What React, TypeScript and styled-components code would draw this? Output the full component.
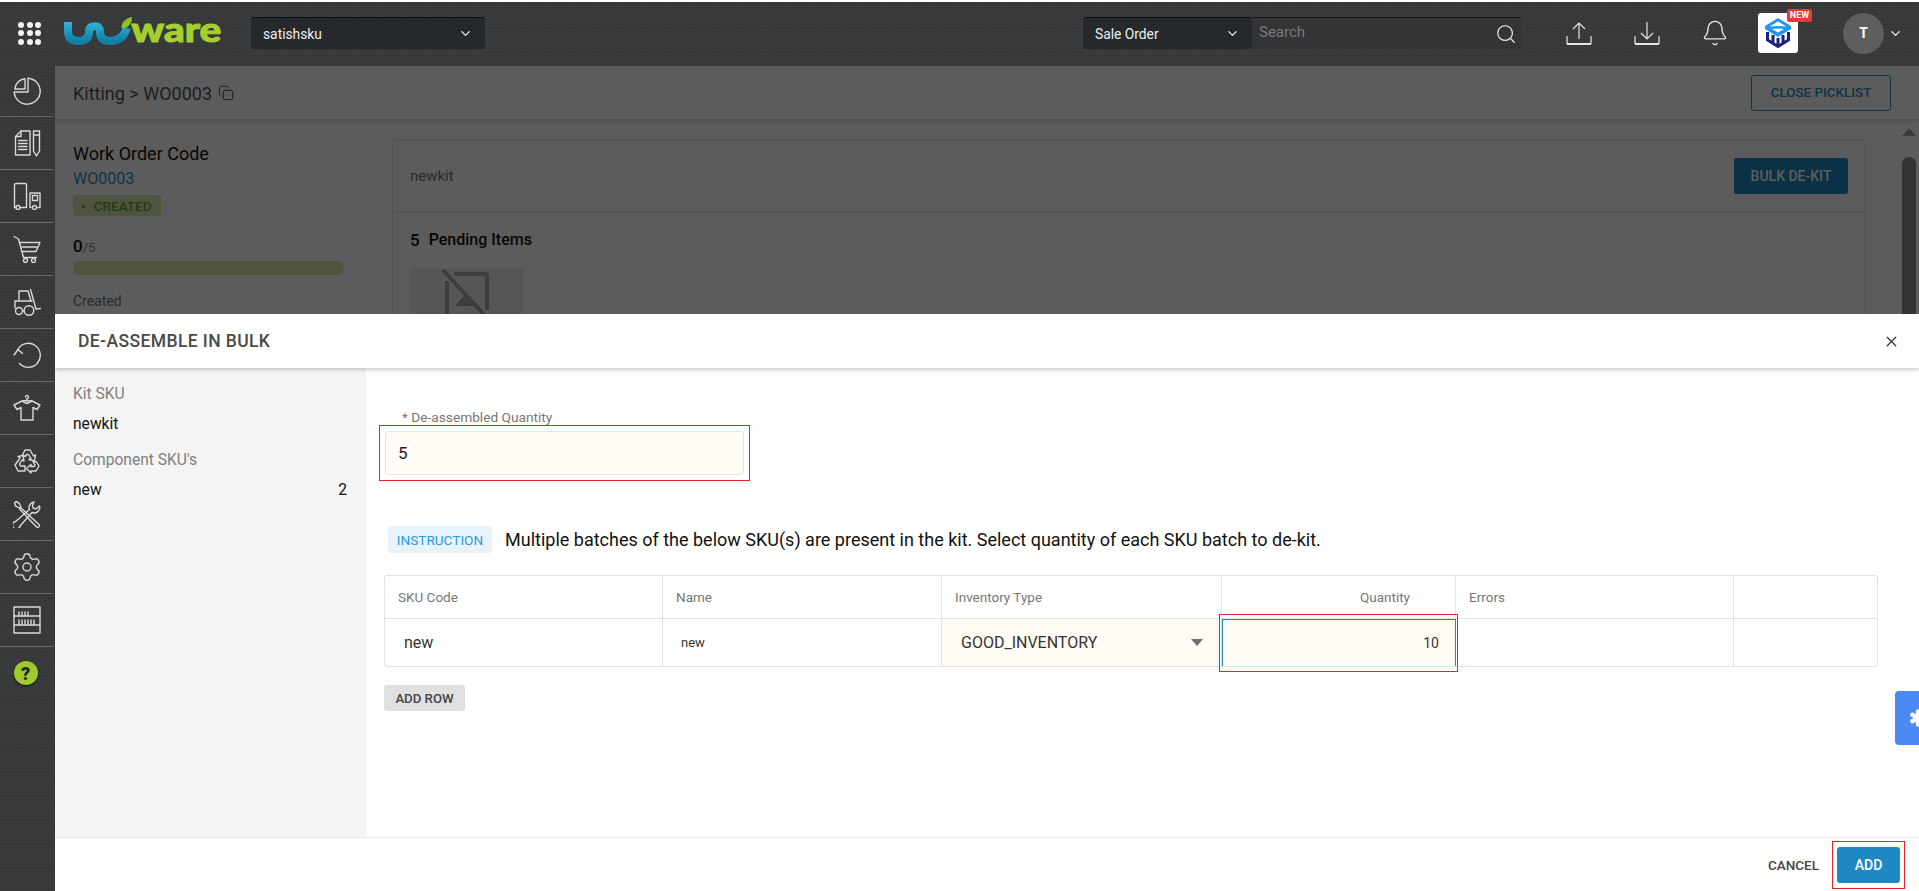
import React from "react";
import styled, { createGlobalStyle } from "styled-components";
import { Asterisk, Bell, ChevronDown, Copy, Search, Settings, X } from "lucide-react";

const GlobalStyle = createGlobalStyle`
  html, body {
    margin: 0;
    padding: 0;
    background: #fff;
    font-family: Roboto, "Liberation Sans", sans-serif;
  }
  * {
    box-sizing: border-box;
  }
`;

const texture = `
  background-color: #38393b;
  background-image:
    repeating-linear-gradient(0deg, rgba(255, 255, 255, 0.018) 0 1px, transparent 1px 3px),
    repeating-linear-gradient(90deg, rgba(0, 0, 0, 0.05) 0 1px, transparent 1px 3px);
`;

const Shell = styled.div`
  width: 1919px;
  height: 891px;
  padding-top: 2px;
  display: flex;
  flex-direction: column;
  overflow: hidden;
`;

const Header = styled.header`
  ${texture}
  height: 64px;
  flex-shrink: 0;
  display: flex;
  align-items: center;
  padding: 0 16px 2px 18px;
`;

const Dots = styled.div`
  display: grid;
  grid-template-columns: repeat(3, 6px);
  gap: 2.5px;
  span {
    width: 6px;
    height: 6px;
    border-radius: 50%;
    background: #f2f2f2;
  }
`;

const LogoWrap = styled.svg`
  width: 160px;
  height: 40px;
  margin-left: 21px;
  margin-bottom: 10px;
`;

const SelectBox = styled.div<{ $w: number }>`
  width: ${(p) => p.$w}px;
  height: 32px;
  padding: 0 12px;
  background: #25292b;
  border-radius: 3px;
  border-top: 1px solid #111;
  color: #eee;
  font-size: 13.8px;
  display: flex;
  align-items: center;
  justify-content: space-between;
`;

const TenantSelect = styled(SelectBox)`
  margin-left: 29px;
`;

const SearchGroup = styled.div`
  margin-left: auto;
  display: flex;
`;

const SearchBox = styled.div`
  width: 269px;
  height: 32px;
  background: #333435;
  border-top: 1px solid #151515;
  border-radius: 0 3px 3px 0;
  display: flex;
  align-items: center;
  justify-content: space-between;
  padding: 0 4px 0 7px;
  color: #eee;
`;

const SearchInput = styled.input`
  border: 0;
  background: transparent;
  outline: none;
  font-family: Roboto, sans-serif;
  font-size: 15px;
  width: 200px;
  padding: 0 0 3px;
  &::placeholder {
    color: #7b7b7b;
  }
`;

const HeaderIcons = styled.div`
  margin-left: 44px;
  display: flex;
  gap: 40px;
  color: #e6e6e6;
`;

const CubeBadge = styled.div`
  position: relative;
  width: 40px;
  height: 40px;
  margin-left: 29px;
  background: #fff;
  border-radius: 3px;
  display: flex;
  align-items: center;
  justify-content: center;
`;

const NewTag = styled.span`
  position: absolute;
  top: -4px;
  right: -14px;
  width: 25px;
  height: 13px;
  background: #e53935;
  border-radius: 2px;
  color: #fff;
  font-size: 9px;
  font-weight: 700;
  line-height: 13px;
  text-align: center;
`;

const Avatar = styled.div`
  width: 41px;
  height: 41px;
  margin-left: 45px;
  border-radius: 50%;
  background: #5e5e5e;
  color: #fff;
  font-size: 14px;
  font-weight: 700;
  display: flex;
  align-items: center;
  justify-content: center;
`;

const AvatarCaret = styled.div`
  margin-left: 4px;
  display: flex;
  color: #f2f2f2;
`;

const Main = styled.div`
  flex: 1;
  display: flex;
  min-height: 0;
`;

const Sidebar = styled.nav`
  ${texture}
  width: 55px;
  flex-shrink: 0;
  display: flex;
  flex-direction: column;
`;

const NavItem = styled.div<{ $first?: boolean }>`
  height: ${(p) => (p.$first ? 51 : 53)}px;
  width: 53px;
  flex-shrink: 0;
  display: flex;
  align-items: center;
  justify-content: center;
  padding: 0 0 1px 1px;
  color: #d8d8d8;
  border-bottom: 1px solid #6a6a6a;
  &:last-child {
    border-bottom: 0;
  }
`;

const HelpDot = styled.div`
  width: 24px;
  height: 24px;
  margin-left: -3px;
  border-radius: 50%;
  background: #9ccb2b;
  color: #23261a;
  font-size: 18px;
  font-weight: 900;
  display: flex;
  align-items: center;
  justify-content: center;
  box-shadow: 0 1px 2px #111;
`;

const Content = styled.main`
  position: relative;
  flex: 1;
  background: #fff;
  overflow: hidden;
`;

const Dim = styled.div`
  position: absolute;
  inset: 0;
  background: rgba(0, 0, 0, 0.64);
`;

const SubHeader = styled.div`
  height: 54px;
  padding: 0 28px 0 18px;
  border-bottom: 1px solid #ddd;
  box-shadow: 0 2px 4px rgba(0, 0, 0, 0.12);
  display: flex;
  align-items: center;
  justify-content: space-between;
`;

const Crumb = styled.div`
  color: #555;
  font-size: 18px;
  display: flex;
  align-items: center;
  gap: 6px;
  padding-top: 1px;
`;

const OutlineButton = styled.button`
  width: 140px;
  height: 36px;
  border: 1px solid #2a8fca;
  border-radius: 3px;
  background: transparent;
  color: #2a8fca;
  font-family: Roboto, sans-serif;
  font-size: 13.4px;
  font-weight: 500;
`;

const PageRow = styled.div`
  display: flex;
  padding: 19px 0 0 18px;
`;

const SummaryColumn = styled.div`
  width: 319px;
  flex-shrink: 0;
  padding-top: 5px;
`;

const OrderLabel = styled.div`
  font-size: 18px;
  line-height: 20px;
  color: #111;
`;

const OrderCode = styled.div`
  margin-top: 5px;
  font-size: 16px;
  line-height: 20px;
  color: #2a90cc;
`;

const StatusBadge = styled.div`
  margin-top: 6px;
  width: 88px;
  height: 21px;
  padding-left: 8px;
  background: #dbe9b2;
  border-radius: 3px;
  color: #6aa52d;
  font-size: 13.5px;
  font-weight: 500;
  display: flex;
  align-items: center;
  gap: 8px;
`;

const Progress = styled.div`
  margin-top: 19px;
  line-height: 22px;
  font-size: 13px;
  color: #888;
  b {
    font-size: 17px;
    font-weight: 500;
    color: #111;
  }
`;

const ProgressBar = styled.div`
  margin-top: 2px;
  width: 271px;
  height: 14px;
  border-radius: 7px;
  background: #dbe9b2;
`;

const CreatedLabel = styled.div`
  margin-top: 17px;
  font-size: 14px;
  line-height: 18px;
  color: #777;
`;

const Card = styled.section`
  flex: 1;
  height: 500px;
  margin-right: 34px;
  border: 1px solid #e4e4e4;
  border-radius: 3px;
`;

const CardHead = styled.div`
  height: 72px;
  padding: 0 17px;
  border-bottom: 1px solid #e4e4e4;
  display: flex;
  align-items: center;
  justify-content: space-between;
  color: #777;
  font-size: 15px;
`;

const SolidButton = styled.button<{ $w: number }>`
  width: ${(p) => p.$w}px;
  height: 36px;
  border: 0;
  border-radius: 3px;
  background: #1f88c2;
  color: #fff;
  font-family: Roboto, sans-serif;
  font-size: 14px;
  font-weight: 500;
`;

const CardBody = styled.div`
  padding: 17px 17px 0;
`;

const PendingTitle = styled.div`
  line-height: 22px;
  font-size: 16px;
  font-weight: 500;
  color: #111;
  display: flex;
  align-items: center;
  gap: 9px;
  b {
    font-size: 17px;
    font-weight: 500;
  }
`;

const Thumb = styled.div`
  margin-top: 18px;
  width: 113px;
  height: 92px;
  background: #efefef;
  display: flex;
  justify-content: center;
  color: #a8a8a8;
`;

const ScrollRail = styled.div`
  width: 19px;
  flex-shrink: 0;
  margin-top: -11px;
  display: flex;
  flex-direction: column;
  align-items: center;
  padding-right: 1px;
`;

const ScrollArrow = styled.div`
  width: 0;
  height: 0;
  border-left: 7px solid transparent;
  border-right: 7px solid transparent;
  border-bottom: 8px solid #a6a6a6;
`;

const ScrollThumb = styled.div`
  margin-top: 21px;
  width: 14px;
  height: 400px;
  border-radius: 7px;
  background: #8e8e8e;
`;

const Modal = styled.div`
  position: absolute;
  left: 0;
  right: 0;
  top: 248px;
  bottom: 0;
  background: #fff;
  display: flex;
  flex-direction: column;
`;

const ModalHead = styled.div`
  position: relative;
  height: 54px;
  flex-shrink: 0;
  padding: 0 19px 0 23px;
  background: #fff;
  box-shadow: 0 2px 4px rgba(0, 0, 0, 0.2);
  display: flex;
  align-items: center;
  justify-content: space-between;
  color: #4a4a4a;
`;

const ModalTitle = styled.h2`
  margin: 0;
  font-size: 17.5px;
  font-weight: 500;
  letter-spacing: 0.4px;
`;

const ModalBody = styled.div`
  flex: 1;
  display: flex;
  min-height: 0;
`;

const SummaryPane = styled.aside`
  width: 311px;
  flex-shrink: 0;
  padding: 17px 19px 0 18px;
  background: #f4f4f4;
`;

const PaneLabel = styled.div`
  font-size: 15.6px;
  line-height: 18px;
  color: #808080;
`;

const PaneValue = styled.div`
  margin-top: 12px;
  margin-bottom: 18px;
  font-size: 15.6px;
  line-height: 18px;
  color: #111;
  display: flex;
  justify-content: space-between;
`;

const FormPane = styled.div`
  flex: 1;
  padding: 41px 0 0 13px;
`;

const FieldLabel = styled.label`
  display: block;
  margin-left: 23px;
  font-size: 13.7px;
  line-height: 16px;
  color: #777;
`;

const Highlight = styled.div`
  width: 371px;
  padding: 5px;
  border: 1px solid #e8202a;
`;

const QuantityInput = styled.input`
  display: block;
  width: 100%;
  height: 44px;
  padding: 0 12px;
  border: 1px solid #e4e4e4;
  border-radius: 3px;
  background: #fffcf5;
  color: #222;
  font-family: Roboto, sans-serif;
  font-size: 17px;
  outline: none;
`;

const InstructionRow = styled.div`
  margin: 45px 0 0 9px;
  display: flex;
  align-items: center;
  gap: 13px;
  color: #111;
  font-size: 18px;
`;

const InstructionTag = styled.span`
  width: 104px;
  height: 27px;
  border-radius: 3px;
  background: #e8f2fa;
  color: #2a9bdc;
  font-size: 13.6px;
  display: flex;
  align-items: center;
  justify-content: center;
`;

const SkuTable = styled.div`
  margin: 22px 0 0 5px;
  width: 1494px;
  border: 1px solid #e2e2e2;
  border-radius: 3px;
  display: grid;
  grid-template-columns: 278px 279px 280px 234px 278px 1fr;
  grid-template-rows: 43px 47px;
`;

const HeadCell = styled.div<{ $right?: boolean }>`
  padding: 0 ${(p) => (p.$right ? 45 : 13)}px 0 13px;
  border-right: 1px solid #e2e2e2;
  border-bottom: 1px solid #e2e2e2;
  color: #777;
  font-size: 13.5px;
  display: flex;
  align-items: center;
  justify-content: ${(p) => (p.$right ? "flex-end" : "flex-start")};
  &:nth-child(6) {
    border-right: 0;
  }
`;

const BodyCell = styled.div<{ $size?: number; $pad?: number }>`
  padding-left: ${(p) => p.$pad ?? 15}px;
  border-right: 1px solid #e2e2e2;
  color: #333;
  font-size: ${(p) => p.$size ?? 14}px;
  display: flex;
  align-items: center;
  &:last-child {
    border-right: 0;
  }
`;

const InventoryCell = styled(BodyCell)`
  padding-right: 18px;
  background: #fffcf5;
  justify-content: space-between;
`;

const Caret = styled.span`
  width: 0;
  height: 0;
  border-left: 6px solid transparent;
  border-right: 6px solid transparent;
  border-top: 7px solid #6f6f6f;
`;

const QuantityCell = styled(BodyCell)`
  position: relative;
  padding: 0 16px 0 0;
  background: #fffcf5;
  border-top: 1px solid #1f88c2;
  border-left: 1px solid #1f88c2;
  border-right: 1px solid #1f88c2;
  justify-content: flex-end;
  font-size: 14px;
  &::after {
    content: "";
    position: absolute;
    inset: -6px -3px -6px -4px;
    border: 1px solid #e8202a;
  }
`;

const AddRowButton = styled.button`
  display: block;
  margin: 18px 0 0 5px;
  width: 81px;
  height: 26px;
  border: 0;
  border-radius: 3px;
  background: #e0e0e0;
  color: #444;
  font-family: Roboto, sans-serif;
  font-size: 13.2px;
  font-weight: 500;
`;

const ModalFoot = styled.div`
  height: 54px;
  flex-shrink: 0;
  padding-right: 14px;
  border-top: 1px solid #e8e8e8;
  display: flex;
  align-items: center;
  justify-content: flex-end;
  gap: 13px;
`;

const CancelButton = styled.span`
  color: #444;
  font-size: 13.5px;
  font-weight: 500;
`;

const AddHighlight = styled.div`
  padding: 5px 4px;
  border: 1px solid #e8202a;
`;

const FeedbackTab = styled.div`
  position: absolute;
  right: 0;
  top: 625px;
  width: 24px;
  height: 54px;
  border-radius: 4px 0 0 4px;
  background: #4a8af4;
  color: #fff;
  overflow: hidden;
  display: flex;
  align-items: center;
  padding-left: 10px;
  svg {
    flex-shrink: 0;
  }
`;

const Logo = () => (
  <LogoWrap viewBox="20 0 480 120">
    <defs>
      <linearGradient id="uniBlue" x1="0" y1="0" x2="0" y2="1">
        <stop offset="0" stopColor="#2fb4d8" />
        <stop offset="1" stopColor="#0f7fa8" />
      </linearGradient>
    </defs>
    <path
      d="M38 42 V70 Q38 99 68 99 Q101 99 101 72 Q101 55 118 55 Q134 55 134 72 Q134 99 164 99 Q204 99 214 60"
      fill="none"
      stroke="url(#uniBlue)"
      strokeWidth="24"
      strokeLinecap="butt"
    />
    <path d="M198 58 Q200 34 230 26 Q230 54 206 62 Z" fill="#8fc02a" />
    <text
      x="228"
      y="103"
      fontFamily="Lato, sans-serif"
      fontWeight="900"
      fontSize="102"
      fill="#a5cf30"
      stroke="#a5cf30"
      strokeWidth="3"
      textLength="270"
      lengthAdjust="spacingAndGlyphs"
    >
      ware
    </text>
  </LogoWrap>
);

const NavSvg = ({ children }: { children: React.ReactNode }) => (
  <svg width="28" height="28" viewBox="0 0 28 28" fill="none" stroke="currentColor" strokeWidth="1.4" strokeLinejoin="round" strokeLinecap="round">
    {children}
  </svg>
);

const navIcons = [
  <NavSvg>
    <path d="M12 1.8A11.5 11.5 0 0 0 1.8 12H12Z" />
    <path d="M15 1.2A13 13 0 1 1 1.2 15H15Z" />
  </NavSvg>,
  <NavSvg>
    <path d="M8 2h9v24H2.5V7.5Z" />
    <path d="M8 2v5.500H2.500M5.500 11.500h8.500M5.500 14.500h8.500M5.500 17.500h8.500M5.500 20.500h8.500" />
    <path d="M20.500 2h6v20l-3 5-3-5ZM20.500 6h6" />
  </NavSvg>,
  <NavSvg>
    <path d="M3 25.500H1.500V3A1.500 1.500 0 0 1 3 1.500h9A1.500 1.500 0 0 1 13.500 3v22.500H7" />
    <circle cx="5" cy="25.500" r="2" />
    <path d="M18 25.500h-1V11h10v14.500h-2" />
    <rect x="19.500" y="13.500" width="5" height="5" />
    <circle cx="21.500" cy="25.500" r="2" />
  </NavSvg>,
  <NavSvg>
    <path d="M1 1.500l4.500 2.500 5 18.500h13" />
    <path d="M6.500 7.500H27l-4 9H9" />
    <path d="M9 12h15" />
    <circle cx="12.500" cy="25.500" r="2" />
    <circle cx="20.500" cy="25.500" r="2" />
  </NavSvg>,
  <NavSvg>
    <path d="M6 12V3h9l3 10" />
    <path d="M2 20v-7h17" />
    <circle cx="6" cy="23" r="3.500" />
    <circle cx="16" cy="22.500" r="4.800" />
    <path d="M17.500 1.500l5.500 19.500 4.500-.5M9.500 23h1.500" />
  </NavSvg>,
  <NavSvg>
    <path d="M4.800 8.500A12 12 0 1 1 6.500 22.500" />
    <path d="M1 14l4-5.500 4.500 4" />
  </NavSvg>,
  <NavSvg>
    <path d="M14 6.500l-5 .500L1 11l3 4.500 4-2V26h12V13.500l4 2 3-4.500-8-4Z" />
    <path d="M14 6.500V4.500a1.500 1.500 0 1 0-1.500-1.500M9 7l5 2.500L19 7" />
  </NavSvg>,
  <NavSvg>
    <path d="M9.500 8L12 3h5l3.500 6 2-1-1 6-5.500-1.500 2-1-2.500-4h-2l-1 2Z" />
    <path d="M7 11l-5 7 3 6h7v-5H7.500l-1-2L9 13l2 1-1-5.500-5 1Z" />
    <path d="M23.500 15l2.500 4-3 5h-5v2l-4.500-4.500L18 17.500v2h3l1-1.500-2-3.500Z" />
  </NavSvg>,
  <NavSvg>
    <path d="M1.500 3l1.500-1.500 3 1.500 2 4-1.200 1.200-4-2ZM8 8l18 16.500a1.800 1.800 0 0 1-2.500 2.500L6.800 9.200" />
    <path d="M21 2a5.500 5.500 0 0 0-4.500 7.500L2.500 21.500a3.800 3.800 0 1 0 4.500 4.500l12-13.500a5.500 5.500 0 0 0 7.500-6.500L23 9l-3-1-.5-3Z" />
  </NavSvg>,
  <Settings size={32} strokeWidth={1.05} />,
  <NavSvg>
    <rect x="1" y="1" width="26" height="26" />
    <path d="M1 10h26M1 19h26" />
    <path d="M6 6v4M9 6v4M12 6v4M15 6v4M6 14v5M9 14v5M12 14v5M15 14v5M18 14v5M21 14v5" />
  </NavSvg>,
];

const UploadIcon = () => (
  <svg width="28" height="28" viewBox="0 0 28 28" fill="none" stroke="currentColor" strokeWidth="1.2">
    <path d="M14 20V4M8 10l6-6 6 6M2 17v8M26 17v8" />
    <path d="M2 25h24" strokeWidth="2" />
  </svg>
);

const DownloadIcon = () => (
  <svg width="28" height="28" viewBox="0 0 28 28" fill="none" stroke="currentColor" strokeWidth="1.2">
    <path d="M14 3v17M8 14l6 6 6-6M2 17v8M26 17v8" />
    <path d="M2 25h24" strokeWidth="2" />
  </svg>
);

const CubeLogo = () => (
  <svg width="26" height="30" viewBox="0 0 26 30" fill="none">
    <path d="M13 0L26 8v3l-13 8L0 11V8Z" fill="#2196f3" />
    <path d="M13 3.500L21.500 8.500 13 8l-8.500.500Z" fill="#fff" />
    <path d="M13 10.500l6 .500-6 3.500-6-3.500Z" fill="#fff" />
    <path d="M2.500 14v8L13 28.500 23.500 22v-8M13 20v8.500M8 17v8M18 17v8" stroke="#1a237e" strokeWidth="3" />
  </svg>
);

const NoImage = () => (
  <svg width="52" height="52" viewBox="0 0 52 52" fill="none" stroke="currentColor" strokeWidth="4">
    <path d="M13 5h31a2 2 0 0 1 2 2v34M6 12v40" />
    <path d="M2 1l46 50" />
    <path d="M14 37h20l-10-11Z" fill="currentColor" stroke="none" />
  </svg>
);

const App = () => (
  <>
    <GlobalStyle />
    <Shell>
      <Header>
        <Dots>
          {Array.from({ length: 9 }).map((_, i) => (
            <span key={i} />
          ))}
        </Dots>
        <Logo />
        <TenantSelect $w={234}>
          satishsku
          <ChevronDown size={15} strokeWidth={2} />
        </TenantSelect>
        <SearchGroup>
          <SelectBox $w={169}>
            Sale Order
            <ChevronDown size={15} strokeWidth={2} />
          </SelectBox>
          <SearchBox>
            <SearchInput placeholder="Search" />
            <Search size={22} strokeWidth={1.3} />
          </SearchBox>
        </SearchGroup>
        <HeaderIcons>
          <UploadIcon />
          <DownloadIcon />
          <Bell size={28} strokeWidth={1.2} />
        </HeaderIcons>
        <CubeBadge>
          <CubeLogo />
          <NewTag>NEW</NewTag>
        </CubeBadge>
        <Avatar>T</Avatar>
        <AvatarCaret>
          <ChevronDown size={15} strokeWidth={2} />
        </AvatarCaret>
      </Header>
      <Main>
        <Sidebar>
          {navIcons.map((icon, i) => (
            <NavItem key={i} $first={i === 0}>
              {icon}
            </NavItem>
          ))}
          <NavItem>
            <HelpDot>?</HelpDot>
          </NavItem>
        </Sidebar>
        <Content>
          <SubHeader>
            <Crumb>
              Kitting &gt; WO0003
              <Copy size={16} strokeWidth={1.5} />
            </Crumb>
            <OutlineButton>CLOSE PICKLIST</OutlineButton>
          </SubHeader>
          <PageRow>
            <SummaryColumn>
              <OrderLabel>Work Order Code</OrderLabel>
              <OrderCode>WO0003</OrderCode>
              <StatusBadge>
                <span>•</span>CREATED
              </StatusBadge>
              <Progress>
                <b>0</b>/5
              </Progress>
              <ProgressBar />
              <CreatedLabel>Created</CreatedLabel>
            </SummaryColumn>
            <Card>
              <CardHead>
                newkit
                <SolidButton $w={114}>BULK DE-KIT</SolidButton>
              </CardHead>
              <CardBody>
                <PendingTitle>
                  <b>5</b>Pending Items
                </PendingTitle>
                <Thumb>
                  <NoImage />
                </Thumb>
              </CardBody>
            </Card>
            <ScrollRail>
              <ScrollArrow />
              <ScrollThumb />
            </ScrollRail>
          </PageRow>
          <Dim />
          <Modal>
            <ModalHead>
              <ModalTitle>DE-ASSEMBLE IN BULK</ModalTitle>
              <X size={17} strokeWidth={1.8} color="#333" />
            </ModalHead>
            <ModalBody>
              <SummaryPane>
                <PaneLabel>Kit SKU</PaneLabel>
                <PaneValue>newkit</PaneValue>
                <PaneLabel>Component SKU's</PaneLabel>
                <PaneValue>
                  <span>new</span>
                  <span>2</span>
                </PaneValue>
              </SummaryPane>
              <FormPane>
                <FieldLabel>* De-assembled Quantity</FieldLabel>
                <Highlight>
                  <QuantityInput defaultValue="5" readOnly />
                </Highlight>
                <InstructionRow>
                  <InstructionTag>INSTRUCTION</InstructionTag>
                  Multiple batches of the below SKU(s) are present in the kit. Select quantity of each SKU batch to de-kit.
                </InstructionRow>
                <SkuTable>
                  <HeadCell>SKU Code</HeadCell>
                  <HeadCell>Name</HeadCell>
                  <HeadCell>Inventory Type</HeadCell>
                  <HeadCell $right>Quantity</HeadCell>
                  <HeadCell>Errors</HeadCell>
                  <HeadCell />
                  <BodyCell $size={16} $pad={19}>new</BodyCell>
                  <BodyCell $size={13} $pad={18}>new</BodyCell>
                  <InventoryCell $size={16} $pad={19}>
                    GOOD_INVENTORY
                    <Caret />
                  </InventoryCell>
                  <QuantityCell>10</QuantityCell>
                  <BodyCell />
                  <BodyCell />
                </SkuTable>
                <AddRowButton>ADD ROW</AddRowButton>
              </FormPane>
            </ModalBody>
            <ModalFoot>
              <CancelButton>CANCEL</CancelButton>
              <AddHighlight>
                <SolidButton $w={63}>ADD</SolidButton>
              </AddHighlight>
            </ModalFoot>
          </Modal>
          <FeedbackTab>
            <Asterisk size={26} strokeWidth={4} />
          </FeedbackTab>
        </Content>
      </Main>
    </Shell>
  </>
);

export default App;
